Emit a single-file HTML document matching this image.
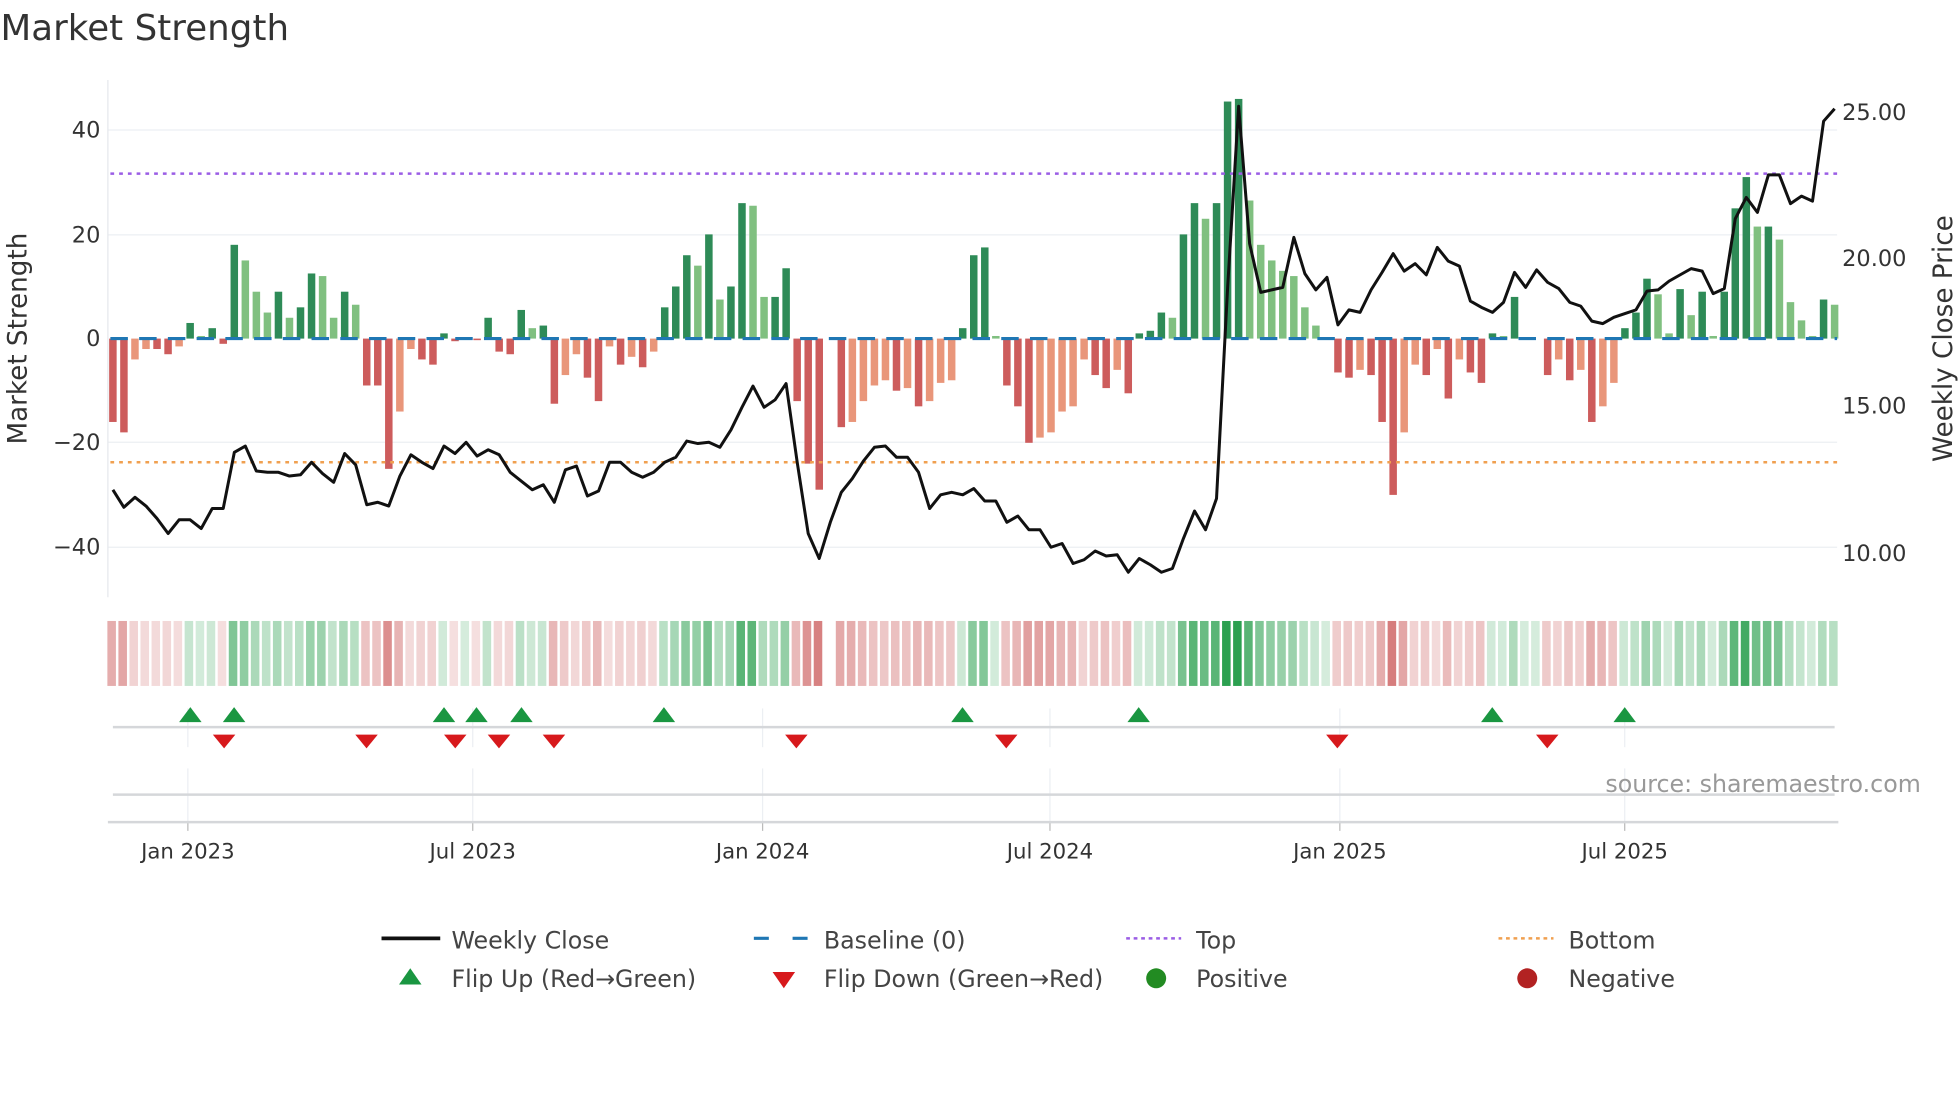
<!DOCTYPE html>
<html><head><meta charset="utf-8"><style>
html,body{margin:0;padding:0;background:#fff;width:1960px;height:1102px;overflow:hidden}
svg{display:block}
text{font-family:"DejaVu Sans","Liberation Sans",sans-serif}
</style></head><body>
<svg id="s" width="1960" height="1102" viewBox="0 0 1568 882" xmlns="http://www.w3.org/2000/svg">
<text x="0" y="32" font-size="28.5" fill="#333" textLength="231">Market Strength</text>
<g stroke="#eceff3" stroke-width="1">
<line x1="86" y1="104" x2="1470" y2="104"/><line x1="86" y1="188" x2="1470" y2="188"/>
<line x1="86" y1="354" x2="1470" y2="354"/><line x1="86" y1="438" x2="1470" y2="438"/>
</g>
<line x1="86" y1="64" x2="86" y2="478" stroke="#e6e8ec" stroke-width="1"/>
<g font-size="18" fill="#333" text-anchor="end">
<text x="80" y="110">40</text><text x="80" y="194">20</text><text x="80" y="277">0</text>
<text x="80" y="360">−20</text><text x="80" y="444">−40</text></g>
<g font-size="18" fill="#333">
<text x="1474" y="96">25.00</text><text x="1474" y="213">20.00</text><text x="1474" y="331">15.00</text><text x="1474" y="449">10.00</text></g>
<text transform="translate(21,271) rotate(-90)" font-size="21" fill="#333" text-anchor="middle">Market Strength</text>
<text transform="translate(1562,271) rotate(-90)" font-size="21" fill="#333" text-anchor="middle">Weekly Close Price</text>
<g id="bars"></g>
<line x1="88" y1="271" x2="1470" y2="271" stroke="#1f77b4" stroke-width="2.5" stroke-dasharray="14 9"/>
<line x1="88" y1="139" x2="1470" y2="139" stroke="#9b5de5" stroke-width="2" stroke-dasharray="3 4"/>
<line x1="88" y1="370" x2="1470" y2="370" stroke="#f0a050" stroke-width="2" stroke-dasharray="3 4"/>
<polyline id="price" fill="none" stroke="#111" stroke-width="2.4" stroke-linejoin="round"/>
<g id="heat"></g>
<g stroke="#eceff3" stroke-width="1" id="vg"></g>
<line x1="90" y1="582" x2="1468" y2="582" stroke="#d5d7da" stroke-width="2"/>
<line x1="90" y1="636" x2="1468" y2="636" stroke="#d5d7da" stroke-width="2"/>
<line x1="86" y1="658" x2="1471" y2="658" stroke="#d5d7da" stroke-width="2"/>
<g id="flips"></g>
<text x="1537" y="634" font-size="19" fill="#999" text-anchor="end">source: sharemaestro.com</text>
<g font-size="17" fill="#333" text-anchor="middle" id="xl"></g>
<g font-size="19" fill="#444">
<line x1="305" y1="751" x2="352" y2="751" stroke="#111" stroke-width="3"/>
<text x="361" y="759">Weekly Close</text>
<line x1="603" y1="751" x2="646" y2="751" stroke="#1f77b4" stroke-width="2.5" stroke-dasharray="12 19"/>
<text x="659" y="759">Baseline (0)</text>
<line x1="901" y1="751" x2="945" y2="751" stroke="#9b5de5" stroke-width="2" stroke-dasharray="3 3"/>
<text x="957" y="759">Top</text>
<line x1="1199" y1="751" x2="1243" y2="751" stroke="#f0a050" stroke-width="2" stroke-dasharray="3 3"/>
<text x="1255" y="759">Bottom</text>
<polygon points="319,788 337,788 328,775" fill="#1a9641"/>
<text x="361" y="790">Flip Up (Red→Green)</text>
<polygon points="618,778 636,778 627,791" fill="#d7191c"/>
<text x="659" y="790">Flip Down (Green→Red)</text>
<circle cx="925" cy="783" r="8" fill="#228b22"/>
<text x="957" y="790">Positive</text>
<circle cx="1222" cy="783" r="8" fill="#b22222"/>
<text x="1255" y="790">Negative</text>
</g>
</svg>
<script>
var NS="http://www.w3.org/2000/svg";
function el(t,a,p){var e=document.createElementNS(NS,t);for(var k in a)e.setAttribute(k,a[k]);p.appendChild(e);return e;}
var V=[-16,-18,-4,-2,-2,-3,-1.5,3,0.5,2,-1,18,15,9,5,9,4,6,12.5,12,4,9,6.5,-9,-9,-25,-14,-2,-4,-5,1,-0.5,0,-0.3,4,-2.5,-3,5.5,2,2.5,-12.5,-7,-3,-7.5,-12,-1.5,-5,-3.5,-5.5,-2.5,6,10,16,14,20,7.5,10,26,25.5,8,8,13.5,-12,-24,-29,0,-17,-16,-12,-9,-8,-10,-9.5,-13,-12,-8.5,-8,2,16,17.5,0.5,-9,-13,-20,-19,-18,-14,-13,-4,-7,-9.5,-6,-10.5,1,1.5,5,4,20,26,23,26,45.5,46,26.5,18,15,13,12,6,2.5,0,-6.5,-7.5,-6,-7,-16,-30,-18,-5,-7,-2,-11.5,-4,-6.5,-8.5,1,0.5,8,0,0,-7,-4,-8,-6,-16,-13,-8.5,2,5,11.5,8.5,1,9.5,4.5,9,0.5,9,25,31,21.5,21.5,19,7,3.5,0.5,7.5,6.5];
var n=V.length,x0=90,x1=1468,st=(x1-x0)/(n-1);
var bars=document.getElementById('bars'),heat=document.getElementById('heat');
for(var i=0;i<n;i++){var v=V[i],p=i?V[i-1]:0,x=x0+i*st;
 if(i==65)continue;
 var c;
 if(v>=0){c=(v>=p)?'#2e8b57':'#80c080';}else{c=(v<=p)?'#cd5c5c':'#e9967a';}
 var h=Math.abs(v)*4.17,y=v>=0?271-h:271;
 if(h>0.3)el('rect',{x:x-3,y:y,width:6,height:h,fill:c},bars);
 var a=Math.min(1,0.2+Math.abs(v)/45);
 var hc=v>=0?'rgba(44,160,80,'+a.toFixed(2)+')':'rgba(200,80,80,'+(a*0.85).toFixed(2)+')';
 el('rect',{x:x-st/2,y:497,width:st-2,height:52,fill:hc},heat);
}
var P=[392,406,398,405,415,427,416,416,423,407,407,362,357,377,378,378,381,380,370,379,386,363,372,404,402,405,381,364,370,375,357,363,354,365,360,364,378,385,392,388,402,376,373,397,393,370,370,378,382,378,370,366,353,355,354,358,344,326,309,326,320,307,370,427,447,418,394,383,369,358,357,366,366,378,407,396,394,396,391,401,401,418,413,424,424,438,435,451,448,441,445,444,458,447,452,458,455,431,409,424,399,230,85,195,234,232,230,190,219,232,222,260,248,250,232,218,203,217,211,220,198,209,213,241,246,250,242,218,230,216,226,231,242,245,257,259,254,251,248,233,232,225,220,215,217,235,231,175,158,170,140,140,163,157,161,97,87];
var pts=[];var m=Math.min(P.length,n);
for(var i=0;i<m;i++){var x=x0+i*st*(n-1)/(m-1);pts.push(x.toFixed(1)+','+P[i]);}
document.getElementById('price').setAttribute('points',pts.join(' '));
var vg=document.getElementById('vg'),xl=document.getElementById('xl');
var T=[[150,'Jan 2023'],[378,'Jul 2023'],[610,'Jan 2024'],[840,'Jul 2024'],[1072,'Jan 2025'],[1300,'Jul 2025']];
T.forEach(function(t){el('line',{x1:t[0],y1:567,x2:t[0],y2:598},vg);el('line',{x1:t[0],y1:615,x2:t[0],y2:658},vg);
 el('line',{x1:t[0],y1:658,x2:t[0],y2:665,stroke:'#bbb','stroke-width':1},vg);
 var tx=el('text',{x:t[0],y:687},xl);tx.textContent=t[1];});
var fl=document.getElementById('flips');
[152,187,355,381,417,531,770,911,1194,1300].forEach(function(x){el('polygon',{points:(x-9)+',578 '+(x+9)+',578 '+x+',566',fill:'#1a9641'},fl);});
[179,293,364,399,443,637,805,1070,1238].forEach(function(x){el('polygon',{points:(x-9)+',588 '+(x+9)+',588 '+x+',599',fill:'#d7191c'},fl);});
</script>
</body></html>
